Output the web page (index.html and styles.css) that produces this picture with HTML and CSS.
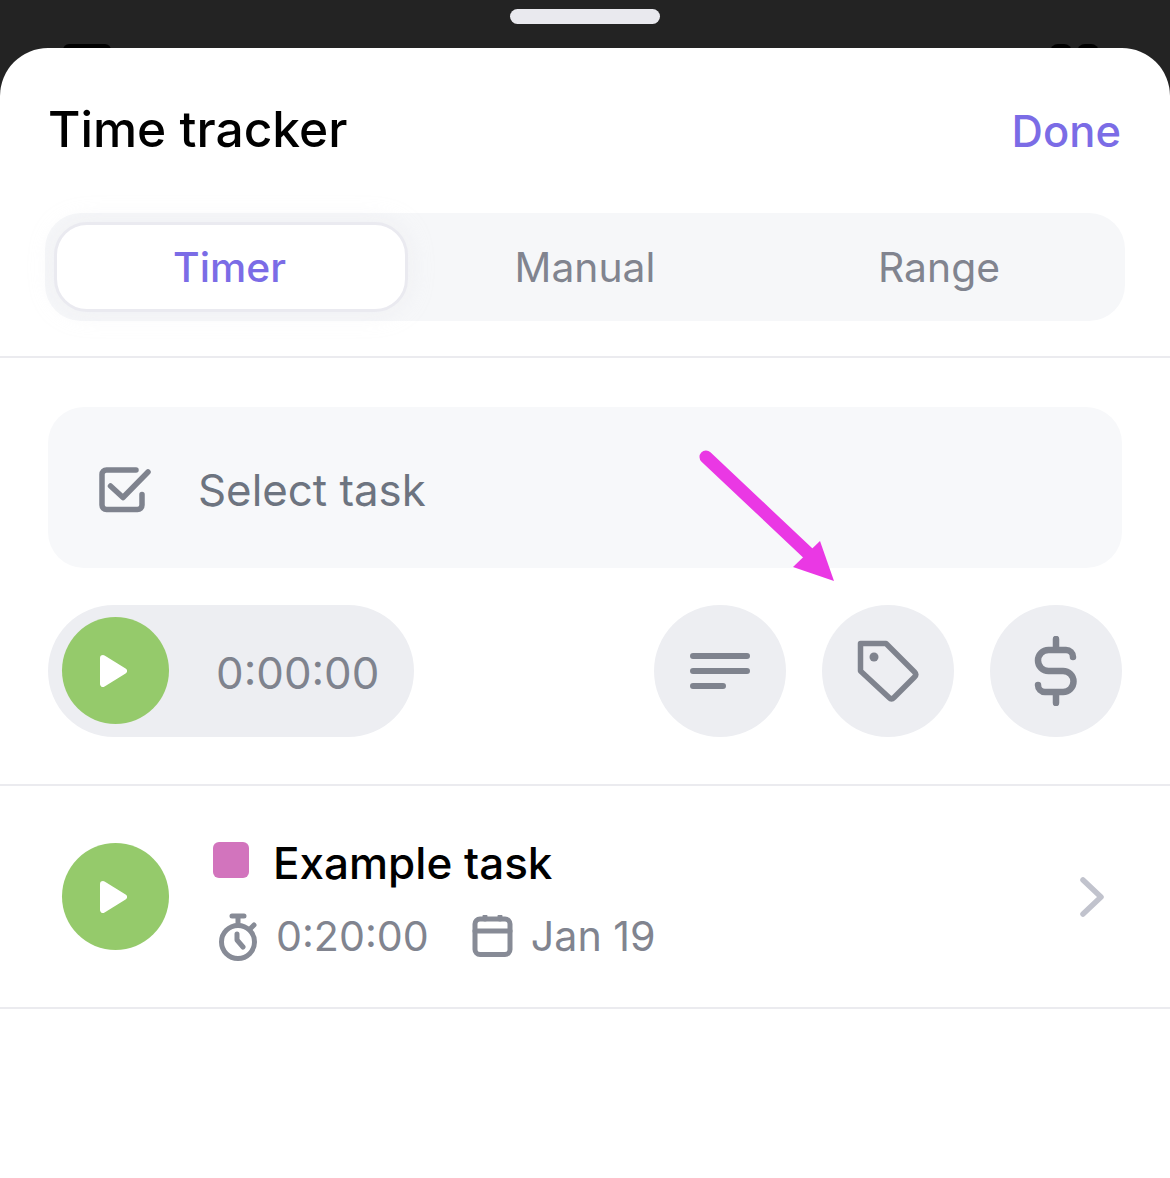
FILE: index.html
```html
<!DOCTYPE html>
<html lang="en">
<head>
<meta charset="utf-8">
<title>Time tracker</title>
<link rel="stylesheet" href="styles.css">
</head>
<body>
<div class="screen">
  <div class="topbar">
    <span class="handle"></span>
    <span class="peek peek-left"></span>
    <span class="peek peek-r1"></span>
    <span class="peek peek-r2"></span>
  </div>
  <main class="sheet">
    <header class="header">
      <h1 class="title">Time tracker</h1>
      <span class="done">Done</span>
    </header>
    <div class="tabs-wrap">
      <div class="tabs">
        <div class="tab tab-active">Timer</div>
        <div class="tab">Manual</div>
        <div class="tab">Range</div>
      </div>
    </div>
    <section class="composer">
      <div class="select-task">
        <svg class="icon-check" viewBox="0 0 52 46" width="52" height="46" fill="none" stroke="#7f838e" stroke-width="5.5" stroke-linecap="round" stroke-linejoin="round">
          <path d="M37 3H7.500A4.500 4.500 0 0 0 3 7.500V38A4.500 4.500 0 0 0 7.500 42.500H38.500A4.500 4.500 0 0 0 43 38V27.500"/>
          <path d="M11.500 19L24 30.500L49 5"/>
        </svg>
        <span class="select-label">Select task</span>
      </div>
      <div class="controls">
        <div class="timer-pill">
          <span class="play play-inset"><svg viewBox="0 0 27 32" width="27" height="32"><path d="M3 3L24 16L3 29Z" fill="#fff" stroke="#fff" stroke-width="6" stroke-linejoin="round"/></svg></span>
          <span class="timer-value">0:00:00</span>
        </div>
        <div class="actions">
          <span class="round-btn">
            <svg viewBox="0 0 60 36" width="60" height="36" fill="none" stroke="#7f838e" stroke-width="6" stroke-linecap="round"><path d="M3 3H57M3 18H57M3 33H33"/></svg>
          </span>
          <span class="round-btn">
            <svg viewBox="0 0 62 62" width="62" height="62" fill="none" stroke="#7f838e" stroke-width="5.500" stroke-linejoin="round"><path d="M3.500 3.500H29L57.500 32Q60 34.500 57.500 37L37 57.500Q34.500 60 32 57.500L3.500 31Z"/><circle cx="17" cy="17" r="4.500" fill="#7f838e" stroke="none"/></svg>
          </span>
          <span class="round-btn">
            <svg viewBox="0 0 44 70" width="44" height="70" fill="none" stroke="#7f838e" stroke-width="6.500" stroke-linecap="round" stroke-linejoin="round"><path d="M22 3V14M22 56V67M39 21A7 7 0 0 0 32 14H14.500A10.500 10.500 0 0 0 14.500 35H29A10.500 10.500 0 0 1 29 56H11A7 7 0 0 1 4 49"/></svg>
          </span>
        </div>
      </div>
    </section>
    <section class="entry">
      <span class="play"><svg viewBox="0 0 27 32" width="27" height="32"><path d="M3 3L24 16L3 29Z" fill="#fff" stroke="#fff" stroke-width="6" stroke-linejoin="round"/></svg></span>
      <div class="entry-body">
        <div class="entry-title-row">
          <span class="swatch"></span>
          <span class="entry-title">Example task</span>
        </div>
        <div class="entry-meta">
          <svg class="meta-icon meta-watch" viewBox="0 0 40 48" width="40" height="48" fill="none" stroke="#878b96" stroke-width="5" stroke-linecap="round" stroke-linejoin="round"><circle cx="20" cy="29" r="16.500"/><path d="M20 12V3M14 3H26M33 15L36 12M19 21V27L25 34"/></svg>
          <span class="meta-text meta-time">0:20:00</span>
          <svg class="meta-icon" viewBox="0 0 41 42" width="41" height="42" fill="none" stroke="#878b96" stroke-width="5" stroke-linecap="round" stroke-linejoin="round"><rect x="3" y="4" width="35" height="35.500" rx="5"/><path d="M3 16H38M13 1.500V4M28 1.500V4"/></svg>
          <span class="meta-text">Jan 19</span>
        </div>
      </div>
      <svg class="chevron" viewBox="0 0 24 40" width="24" height="40" fill="none" stroke="#c1c3cd" stroke-width="5.500" stroke-linecap="round" stroke-linejoin="round"><path d="M3 3L21 20L3 37"/></svg>
    </section>
  </main>
  <svg class="arrow" viewBox="0 0 140 136" width="140" height="136">
    <path d="M8 8L113 107" fill="none" stroke="#ea38e4" stroke-width="13" stroke-linecap="round"/>
    <path d="M122 92L136 132L95 118Z" fill="#ea38e4"/>
  </svg>
</div>
</body>
</html>
```
FILE: styles.css
```css
* { box-sizing: border-box; }
html, body { margin: 0; padding: 0; }
body { font-family: Inter, "Noto Sans", sans-serif; background: #fff; }
.screen { position: relative; width: 1170px; height: 1178px; overflow: hidden; background: #232323; }
.topbar { position: relative; height: 48px; display: flex; justify-content: center; padding-top: 9px; }
.handle { width: 150px; height: 15px; border-radius: 8px; background: #e9e9ee; }
.peek { position: absolute; top: 44px; height: 8px; background: #000; border-radius: 6px 6px 0 0; }
.peek-left { left: 63px; width: 48px; }
.peek-r1 { left: 1050px; width: 22px; border-radius: 10px 10px 0 0; }
.peek-r2 { left: 1077px; width: 22px; border-radius: 10px 10px 0 0; }
.sheet { position: relative; height: 1130px; background: #fff; border-radius: 48px 48px 0 0; }
.header { display: flex; justify-content: space-between; align-items: center; height: 165px; padding: 0 49px 0 48px; }
.title { margin: 0 0 3px; font-size: 49.700px; font-weight: 500; color: #000; letter-spacing: 0; }
.done { font-size: 43.500px; font-weight: 500; color: #7b6ce6; }
.tabs-wrap { padding: 0 45px 35px; border-bottom: 2px solid #ebebef; }
.tabs { display: grid; grid-template-columns: 354px 1fr 1fr; height: 108px; padding: 9px; gap: 0; background: #f6f7f9; border-radius: 36px; }
.tab { display: flex; align-items: center; justify-content: center; padding-bottom: 1px; font-size: 40.800px; color: #81848f; }
.tab-active { padding-right: 3px; background: #fff; color: #7b6ce6; font-weight: 500; border: 3px solid #eaeaf0; border-radius: 33px; box-shadow: 0 0 24px rgba(225, 226, 232, 0.35); }
.composer { padding: 49px 48px 47px; border-bottom: 2px solid #ebebef; }
.select-task { display: flex; align-items: center; height: 161px; padding: 4px 0 0 51px; background: #f7f8fa; border-radius: 36px; }
.icon-check { margin-right: 47px; flex: none; }
.select-label { margin-top: 2px; font-size: 43.800px; color: #6d7480; }
.controls { display: flex; justify-content: space-between; margin-top: 37px; }
.timer-pill { display: flex; align-items: center; width: 366px; height: 132px; padding-left: 14px; background: #edeef2; border-radius: 66px; }
.play { display: flex; align-items: center; justify-content: center; flex: none; width: 107px; height: 107px; padding-right: 4px; border-radius: 50%; background: #95ca6b; }
.play-inset { margin-bottom: 1px; }
.timer-value { margin: 4px 0 0 47px; font-size: 43.800px; color: #7f838e; }
.actions { display: flex; gap: 36px; }
.round-btn { display: flex; align-items: center; justify-content: center; width: 132px; height: 132px; border-radius: 50%; background: #edeef2; }
.entry { display: flex; align-items: center; height: 223px; padding: 0 66px 0 62px; border-bottom: 2px solid #ebebef; }
.entry-body { flex: 1; align-self: flex-start; margin-left: 44px; padding-top: 56px; }
.entry-title-row { display: flex; align-items: center; height: 36px; }
.swatch { width: 36px; height: 36px; margin-right: 25px; border-radius: 6px; background: #d274bd; }
.entry-title { margin: 6px 0 0 -1px; font-size: 44px; font-weight: 500; color: #000; }
.entry-meta { display: flex; align-items: center; height: 48px; margin-top: 34px; padding-left: 5px; }
.meta-icon { flex: none; }
.meta-watch { margin-top: 2px; }
.meta-text { margin-left: 18px; font-size: 41.200px; color: #81848f; }
.meta-time { margin-right: 43px; }
.arrow { position: absolute; left: 698px; top: 449px; }
```
